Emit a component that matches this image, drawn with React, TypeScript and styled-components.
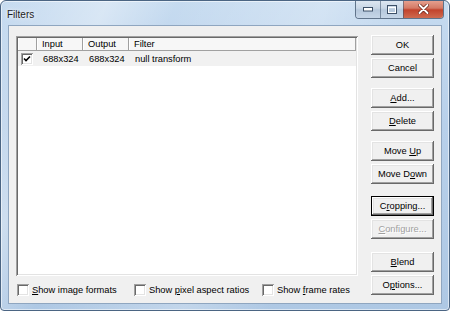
import React from 'react';
import styled, { createGlobalStyle, css } from 'styled-components';

const Global = createGlobalStyle`
  html, body { margin: 0; padding: 0; background: #ffffff; }
  body {
    width: 450px; height: 311px; overflow: hidden;
    font-family: "Liberation Sans", Arial, sans-serif;
    font-size: 9.3px;
    color: #000;
  }
  * { box-sizing: border-box; }
`;

const Window = styled.div`
  width: 450px;
  height: 311px;
  display: flex;
  flex-direction: column;
  border: 1px solid #4b6583;
  border-radius: 6px 6px 4px 4px;
  background:
    linear-gradient(115deg, rgba(255,255,255,0) 0%, rgba(255,255,255,0.35) 18%, rgba(255,255,255,0) 30%, rgba(255,255,255,0.25) 55%, rgba(255,255,255,0) 70%),
    linear-gradient(180deg, #c6dbf0 0%, #b8d0ea 40%, #aec8e4 100%);
  box-shadow: inset 0 0 0 1px rgba(255,255,255,0.55);
  overflow: hidden;
`;

const TitleBar = styled.div`
  height: 24px;
  display: flex;
  align-items: flex-start;
  padding-left: 6px;
`;

const Title = styled.div`
  font-family: "Liberation Sans", Arial, sans-serif;
  font-size: 10px;
  color: #1b1b1b;
  padding-top: 8px;
  text-shadow: 0 0 6px rgba(255,255,255,0.9), 0 0 3px rgba(255,255,255,0.9);
`;

const CaptionGroup = styled.div`
  margin-left: auto;
  margin-right: 5px;
  margin-top: -1px;
  display: flex;
  height: 19px;
  border: 1px solid rgba(60, 80, 105, 0.75);
  border-top: none;
  border-radius: 0 0 4px 4px;
  overflow: hidden;
`;

const CapBtn = styled.div<{ $w: number; $close?: boolean }>`
  width: ${(p) => p.$w}px;
  height: 100%;
  display: flex;
  align-items: center;
  justify-content: center;
  border-left: 1px solid rgba(60, 80, 105, 0.55);
  &:first-child { border-left: none; }
  ${(p) =>
    p.$close
      ? css`
          background: linear-gradient(180deg, #e8a493 0%, #d47a66 45%, #c2432c 55%, #cf6a4f 100%);
        `
      : css`
          background: linear-gradient(180deg, #dfe8f2 0%, #c9d7e6 45%, #b6c8dc 55%, #c6d6e8 100%);
        `}
`;

const Client = styled.div`
  flex: 1;
  margin: 0 7px 6px 7px;
  background: #f0f0f0;
  border: 1px solid #8fa6c0;
  display: flex;
  padding: 9px 7px 0 7px;
`;

const LeftCol = styled.div`
  width: 342px;
  display: flex;
  flex-direction: column;
`;

const ListBox = styled.div`
  margin-top: 1px;
  height: 240px;
  background: #fff;
  padding: 2px;
  box-shadow:
    inset 1px 1px #a0a0a0,
    inset -1px -1px #ffffff,
    inset 2px 2px #696969,
    inset -2px -2px #e3e3e3;
  display: flex;
  flex-direction: column;
`;

const Header = styled.div`
  height: 13px;
  display: flex;
  background: #f7f7f7;
  border-bottom: 1px solid #a0a0a0;
`;

const HeadCell = styled.div<{ $w?: number }>`
  ${(p) => (p.$w ? css`width: ${p.$w}px;` : css`flex: 1;`)}
  height: 100%;
  padding-left: 5px;
  line-height: 12px;
  border-right: 1px solid #a0a0a0;
  box-shadow: inset 1px 0 #ffffff;
  white-space: nowrap;
`;

const Row = styled.div`
  height: 15px;
  display: flex;
  align-items: center;
  background: #f1f1f1;
`;

const Cell = styled.div<{ $w?: number }>`
  ${(p) => (p.$w ? css`width: ${p.$w}px;` : css`flex: 1;`)}
  padding-left: 6px;
  white-space: nowrap;
`;

const CheckCell = styled.div`
  width: 19px;
  display: flex;
  align-items: center;
  padding-left: 3px;
`;

const Box = styled.div`
  width: 12px;
  height: 12px;
  background: #fff;
  box-shadow:
    inset 1px 1px #a0a0a0,
    inset -1px -1px #ffffff,
    inset 2px 2px #696969,
    inset -2px -2px #e3e3e3;
  display: flex;
  align-items: center;
  justify-content: center;
  flex: none;
`;

const Options = styled.div`
  margin-top: 7px;
  display: flex;
  align-items: center;
  height: 13px;
`;

const OptItem = styled.label<{ $w?: number }>`
  ${(p) => (p.$w ? css`width: ${p.$w}px;` : '')}
  display: flex;
  align-items: center;
  gap: 3px;
  padding-left: 1px;
  white-space: nowrap;
`;

const RightCol = styled.div`
  width: 63px;
  margin-left: 13px;
  display: flex;
  flex-direction: column;
`;

const Btn = styled.div<{ $gap?: number; $default?: boolean; $disabled?: boolean }>`
  height: 20px;
  margin-top: ${(p) => p.$gap ?? 3}px;
  display: flex;
  align-items: center;
  justify-content: center;
  background: #f0f0f0;
  white-space: nowrap;
  box-shadow:
    inset -1px -1px #696969,
    inset 1px 1px #ffffff,
    inset -2px -2px #a0a0a0,
    inset 2px 2px #e3e3e3;
  ${(p) =>
    p.$default &&
    css`
      border: 1px solid #000;
    `}
  ${(p) =>
    p.$disabled &&
    css`
      color: #a0a0a0;
      text-shadow: 1px 1px #ffffff;
    `}
`;

const U = styled.span`
  text-decoration: underline;
  text-underline-offset: 1px;
`;

const Check = () => (
  <svg width="8" height="8" viewBox="0 0 8 8">
    <path d="M1 3.5 L3 5.5 L7 1.5" fill="none" stroke="#000" strokeWidth="1.6" />
  </svg>
);

const MinGlyph = () => (
  <svg width="10" height="5" viewBox="0 0 10 5">
    <rect x="0.5" y="0.5" width="9" height="3.5" fill="#fff" stroke="#3d5068" strokeWidth="1" />
  </svg>
);

const MaxGlyph = () => (
  <svg width="10" height="9" viewBox="0 0 10 9">
    <rect x="0.5" y="0.5" width="9" height="8" fill="none" stroke="#3d5068" strokeWidth="1" />
    <rect x="1.5" y="2.5" width="7" height="5" fill="none" stroke="#fff" strokeWidth="1" />
  </svg>
);

const CloseGlyph = () => (
  <svg width="11" height="10" viewBox="0 0 11 10">
    <path d="M1.5 1 L9.5 9 M9.5 1 L1.5 9" stroke="#6b2418" strokeWidth="3.4" strokeLinecap="round" />
    <path d="M1.5 1 L9.5 9 M9.5 1 L1.5 9" stroke="#fff" strokeWidth="1.8" strokeLinecap="round" />
  </svg>
);

export default function App() {
  return (
    <>
      <Global />
      <Window>
        <TitleBar>
          <Title>Filters</Title>
          <CaptionGroup>
            <CapBtn $w={24}><MinGlyph /></CapBtn>
            <CapBtn $w={23}><MaxGlyph /></CapBtn>
            <CapBtn $w={40} $close><CloseGlyph /></CapBtn>
          </CaptionGroup>
        </TitleBar>
        <Client>
          <LeftCol>
            <ListBox>
              <Header>
                <HeadCell $w={19} />
                <HeadCell $w={46}>Input</HeadCell>
                <HeadCell $w={46}>Output</HeadCell>
                <HeadCell>Filter</HeadCell>
              </Header>
              <Row>
                <CheckCell>
                  <Box><Check /></Box>
                </CheckCell>
                <Cell $w={46}>688x324</Cell>
                <Cell $w={46}>688x324</Cell>
                <Cell>null transform</Cell>
              </Row>
            </ListBox>
            <Options>
              <OptItem $w={117}><Box /><span><U>S</U>how image formats</span></OptItem>
              <OptItem $w={128}><Box /><span>Show <U>p</U>ixel aspect ratios</span></OptItem>
              <OptItem><Box /><span>Show <U>f</U>rame rates</span></OptItem>
            </Options>
          </LeftCol>
          <RightCol>
            <Btn $gap={0}>OK</Btn>
            <Btn>Cancel</Btn>
            <Btn $gap={10}><span><U>A</U>dd...</span></Btn>
            <Btn><span><U>D</U>elete</span></Btn>
            <Btn $gap={10}><span>Move <U>U</U>p</span></Btn>
            <Btn><span>Move D<U>o</U>wn</span></Btn>
            <Btn $gap={12} $default><span>C<U>r</U>opping...</span></Btn>
            <Btn $disabled><span><U>C</U>onfigure...</span></Btn>
            <Btn $gap={13}><span><U>B</U>lend</span></Btn>
            <Btn><span>O<U>p</U>tions...</span></Btn>
          </RightCol>
        </Client>
      </Window>
    </>
  );
}
